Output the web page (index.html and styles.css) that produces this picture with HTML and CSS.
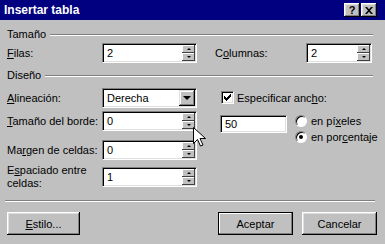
FILE: index.html
```html
<!DOCTYPE html>
<html lang="es">
<head>
  <meta charset="UTF-8">
  <title>Insertar tabla</title>
  <link rel="stylesheet" href="styles.css">
</head>
<body>
  <div class="dialog">
    <div class="titlebar">
      <span class="title">Insertar tabla</span>
      <div class="cap-buttons">
        <span class="cap-btn help">?</span>
        <span class="cap-btn">
          <svg width="8" height="7" viewBox="0 0 8 7"><path d="M0 0h2l2 2.3 2-2.3h2l-3 3.5 3 3.5h-2l-2-2.3-2 2.3h-2l3-3.5z" fill="#000"/></svg>
        </span>
      </div>
    </div>
    <div class="content">
      <div class="group-head"><span>Tamaño</span><i class="etch"></i></div>
      <div class="size-row">
        <span class="lbl"><u>F</u>ilas:</span>
        <div class="field w95">
          <span class="val">2</span>
          <div class="spin"><span class="sb"><i class="up"></i></span><span class="sb"><i class="down"></i></span></div>
        </div>
        <span class="lbl lbl-col">C<u>o</u>lumnas:</span>
        <div class="field w66">
          <span class="val">2</span>
          <div class="spin"><span class="sb"><i class="up"></i></span><span class="sb"><i class="down"></i></span></div>
        </div>
      </div>

      <div class="group-head second"><span>Diseño</span><i class="etch"></i></div>
      <div class="design">
        <div class="left">
          <div class="row">
            <span class="lbl"><u>A</u>lineación:</span>
            <div class="field w95">
              <span class="val">Derecha</span>
              <span class="dd"><i class="dd-arrow"></i></span>
            </div>
          </div>
          <div class="row r2">
            <span class="lbl"><u>T</u>amaño del borde:</span>
            <div class="field w95">
              <span class="val">0</span>
              <div class="spin"><span class="sb"><i class="up"></i></span><span class="sb"><i class="down"></i></span></div>
            </div>
          </div>
          <div class="row r3">
            <span class="lbl">Ma<u>r</u>gen de celdas:</span>
            <div class="field w95">
              <span class="val">0</span>
              <div class="spin"><span class="sb"><i class="up"></i></span><span class="sb"><i class="down"></i></span></div>
            </div>
          </div>
          <div class="row r4">
            <span class="lbl">E<u>s</u>paciado entre<br>celdas:</span>
            <div class="field w95">
              <span class="val">1</span>
              <div class="spin"><span class="sb"><i class="up"></i></span><span class="sb"><i class="down"></i></span></div>
            </div>
          </div>
        </div>

        <div class="right">
          <div class="check-row">
            <span class="checkbox">
              <svg width="7" height="7" viewBox="0 0 7 7"><path d="M6 0h1v1h-1zM5 1h2v1h-2zM0 2h1v1h-1zM4 2h3v1h-3zM0 3h2v1h-2zM3 3h3v1h-3zM0 4h5v1h-5zM1 5h3v1h-3zM2 6h1v1h-1z" fill="#000"/></svg>
            </span>
            <span>Especificar anc<u>h</u>o:</span>
          </div>
          <div class="width-row">
            <div class="field w67"><span class="val">50</span></div>
            <div class="radios">
              <div class="radio-row"><span class="radio"></span><span>en pí<u>x</u>eles</span></div>
              <div class="radio-row"><span class="radio on"></span><span>en por<u>c</u>entaje</span></div>
            </div>
          </div>
        </div>
      </div>

      <div class="sep"></div>
      <div class="buttons">
        <span class="btn w73"><span><u>E</u>stilo...</span></span>
        <span class="btn default push">Aceptar</span>
        <span class="btn cancel">Cancelar</span>
      </div>
    </div>

    <svg class="cursor" width="13" height="20" viewBox="0 0 13 20">
      <path d="M0.5 0.5v16l4-4 3 6.5 2.5-1-3-6.5h5.5z" fill="#fff" stroke="#000" stroke-width="1"/>
    </svg>
  </div>
</body>
</html>
```

FILE: styles.css
```css
* {
  box-sizing: border-box;
}
body {
  margin: 0;
  background-color: #c0c0c0;
  font-family: "Liberation Sans", Arial, sans-serif;
  font-size: 11px;
  color: #000;
}
.dialog {
  position: relative;
  width: 385px;
  height: 244px;
  overflow: hidden;
}
.titlebar {
  height: 20px;
  background-color: #000080;
  display: flex;
  align-items: center;
  padding: 0 8px 0 4px;
  color: white;
}
.title {
  flex: 1;
  font-weight: bold;
  font-size: 12px;
}
.cap-buttons {
  display: flex;
  gap: 1px;
}
.cap-btn {
  width: 16px;
  height: 14px;
  background-color: #c0c0c0;
  box-shadow: inset -1px -1px #000, inset 1px 1px #fff, inset -2px -2px #808080, inset 2px 2px #dfdfdf;
  display: flex;
  align-items: center;
  justify-content: center;
  color: #000;
}
.help {
  font-weight: bold;
  font-size: 11px;
}
.content {
  padding: 8px 12px 0 7px;
}
.group-head {
  display: flex;
  align-items: center;
  gap: 4px;
  height: 13px;
  line-height: 13px;
}
.group-head.second {
  margin-top: 6px;
}
.etch {
  flex: 1;
  height: 2px;
  border-top: 1px solid #808080;
  border-bottom: 1px solid #fff;
}
.size-row {
  display: flex;
  align-items: center;
  margin-top: 2px;
}
.lbl {
  width: 95px;
  line-height: 13px;
  white-space: nowrap;
}
.lbl-col {
  margin-left: 18px;
  width: 91px;
}
.field {
  flex-shrink: 0;
  height: 20px;
  background-color: #fff;
  border: 1px solid;
  border-color: #808080 #fff #fff #808080;
  box-shadow: inset 1px 1px #000, inset -1px -1px #dfdfdf;
  padding: 1px;
  display: flex;
  align-items: center;
}
.w95 { width: 95px; }
.w66 { width: 66px; }
.w67 { width: 67px; height: 18px; }
.val {
  flex: 1;
  padding-left: 3px;
  white-space: nowrap;
}
.spin {
  width: 13px;
  height: 16px;
  display: flex;
  flex-direction: column;
}
.sb {
  height: 8px;
  background-color: #c0c0c0;
  box-shadow: inset -1px -1px #404040, inset 1px 1px #fff;
  display: flex;
  align-items: center;
  justify-content: center;
}
.up {
  width: 0;
  height: 0;
  border-left: 2px solid transparent;
  border-right: 2px solid transparent;
  border-bottom: 2px solid #000;
}
.down {
  width: 0;
  height: 0;
  border-left: 2px solid transparent;
  border-right: 2px solid transparent;
  border-top: 2px solid #000;
}
.dd {
  width: 16px;
  height: 16px;
  background-color: #c0c0c0;
  box-shadow: inset -1px -1px #000, inset 1px 1px #dfdfdf, inset -2px -2px #808080, inset 2px 2px #fff;
  display: flex;
  align-items: center;
  justify-content: center;
}
.dd-arrow {
  width: 0;
  height: 0;
  border-left: 4px solid transparent;
  border-right: 4px solid transparent;
  border-top: 4px solid #000;
}
.design {
  display: flex;
  margin-top: 6px;
}
.left {
  width: 190px;
  flex-shrink: 0;
  display: flex;
  flex-direction: column;
}
.row {
  display: flex;
  align-items: center;
}
.r2 { margin-top: 3px; }
.r3 { margin-top: 9px; }
.r4 { margin-top: 4px; }
.right {
  flex: 1;
  margin-left: 23px;
  padding-top: 3px;
  white-space: nowrap;
}
.check-row {
  display: flex;
  align-items: center;
  gap: 3px;
  height: 13px;
  margin-left: 1px;
}
.checkbox {
  width: 13px;
  height: 13px;
  background-color: #fff;
  border: 1px solid;
  border-color: #808080 #fff #fff #808080;
  box-shadow: inset 1px 1px #000, inset -1px -1px #dfdfdf;
  display: flex;
  align-items: center;
  justify-content: center;
}
.width-row {
  display: flex;
  margin-top: 11px;
}
.radios {
  margin-left: 8px;
  display: flex;
  flex-direction: column;
  gap: 4px;
}
.radio-row {
  display: flex;
  align-items: center;
  gap: 4px;
  height: 12px;
}
.radio {
  flex-shrink: 0;
  width: 12px;
  height: 12px;
  border-radius: 50%;
  background-color: #fff;
  border: 1px solid;
  border-color: #808080 #fff #fff #808080;
  box-shadow: inset 1px 1px #000;
  display: flex;
  align-items: center;
  justify-content: center;
}
.radio.on::after {
  content: "";
  width: 4px;
  height: 4px;
  border-radius: 50%;
  background-color: #000;
}
.sep {
  height: 2px;
  margin: 10px -2px 0 -2px;
  border-top: 1px solid #808080;
  border-bottom: 1px solid #fff;
}
.buttons {
  display: flex;
  margin-top: 10px;
  margin-right: -4px;
}
.btn {
  height: 23px;
  width: 75px;
  background-color: #c0c0c0;
  box-shadow: inset -1px -1px #000, inset 1px 1px #fff, inset -2px -2px #808080, inset 2px 2px #dfdfdf;
  display: flex;
  align-items: center;
  justify-content: center;
}
.w73 { width: 73px; }
.default {
  border: 1px solid #000;
  box-shadow: inset -1px -1px #808080, inset 1px 1px #fff;
}
.push { margin-left: auto; }
.cancel { margin-left: 9px; }
.cursor {
  position: absolute;
  left: 193px;
  top: 127px;
}
```
